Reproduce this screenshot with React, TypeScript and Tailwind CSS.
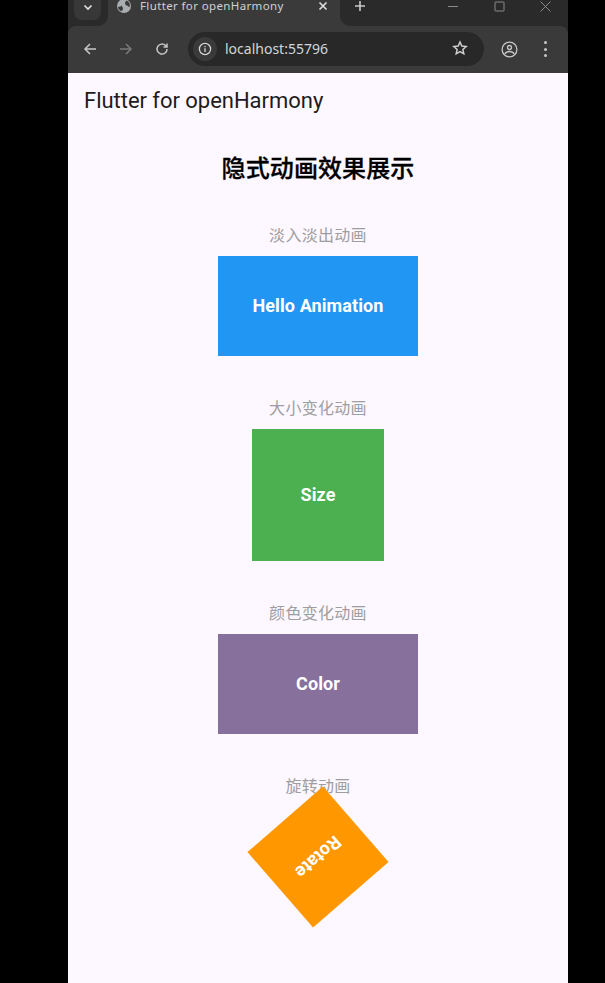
import React from "react";

const sections = [
  { label: "淡入淡出动画", text: "Hello Animation", box: "w-[200px] h-[100px] bg-[#2196f3]" },
  { label: "大小变化动画", text: "Size", box: "w-[132px] h-[132px] bg-[#4caf50]" },
  { label: "颜色变化动画", text: "Color", box: "w-[200px] h-[100px] bg-[#87709b]" },
  { label: "旋转动画", text: "Rotate", box: "w-[100px] h-[100px] bg-[#ff9800] rotate-[139deg]" },
];

function BrowserChrome() {
  return (
    <div className="bg-[#2a2a2a] text-[#c7c7c7] font-['Noto_Sans',sans-serif]">
      {/* tab strip, the dark pieces curve into the active tab */}
      <div className="h-[26px] flex bg-[#3a3a3a]">
        <div className="w-[40px] bg-[#2a2a2a] rounded-br-[10px]">
          <div className="ml-[6px] w-[27px] h-[20px] rounded-b-[8px] bg-[#383838] flex items-center justify-center pb-[6px]">
            <svg width="10" height="10" viewBox="0 0 10 10" fill="none" stroke="#e3e3e3" strokeWidth="1.6">
              <path d="M1.5 3.5 5 7l3.500-3.500" />
            </svg>
          </div>
        </div>
        <div className="w-[232px] flex items-center pl-[9px] pr-[12px] pb-[14px]">
          <svg width="14" height="14" viewBox="0 0 14 14">
            <circle cx="7" cy="7" r="7" fill="#a9adb1" />
            <path d="M4.500 1.500 7.500 1c.5 1 .2 2-.8 2.500L6 5.500 3.500 6 1.500 4.500C2 3 3.200 2 4.500 1.500ZM9 8l2.500.5L12 10.500 10 12.500 8 13l-.5-2.500L6.500 9.500 9 8Z" fill="#3a3a3a" transform="rotate(90 7 7)" />
          </svg>
          <span className="ml-[9px] text-[11.5px] leading-[12px] tracking-[0.37px] text-[#d0d0d0] whitespace-nowrap">Flutter for openHarmony</span>
          <svg className="ml-auto" width="10" height="10" viewBox="0 0 10 10" stroke="#e0e0e0" strokeWidth="1.6">
            <path d="m1.500 1.500 7 7m0-7-7 7" />
          </svg>
        </div>
        <div className="flex-1 bg-[#2a2a2a] rounded-bl-[10px] flex items-start">
          <svg className="ml-[14px]" width="12" height="12" viewBox="0 0 12 12" stroke="#c9c9c9" strokeWidth="1.6">
            <path d="M6 1v10M1 6h10" />
          </svg>
          <div className="ml-auto flex items-center mr-[17px] gap-[35px] h-[12px]">
            <svg width="11" height="11" viewBox="0 0 11 11" stroke="#8a8a8a"><path d="M0 5.500h10" /></svg>
            <svg width="11" height="11" viewBox="0 0 11 11" fill="none" stroke="#8a8a8a"><rect x="1" y="1" width="9" height="9" rx="0.5" /></svg>
            <svg width="11" height="11" viewBox="0 0 11 11" stroke="#8a8a8a"><path d="m.5.500 10 10m0-10-10 10" /></svg>
          </div>
        </div>
      </div>
      {/* toolbar */}
      <div className="h-[47px] bg-[#3a3a3a] rounded-t-[8px] flex items-center pl-[14px] pb-[1px]">
        <svg width="16" height="16" viewBox="0 0 16 16" fill="none" stroke="#c7c7c7" strokeWidth="1.500">
          <path d="M14 8H3M8 3 3 8l5 5" />
        </svg>
        <svg className="ml-[20px]" width="16" height="16" viewBox="0 0 16 16" fill="none" stroke="#7a7a7a" strokeWidth="1.500">
          <path d="M2 8h11M8 3l5 5-5 5" />
        </svg>
        <svg className="ml-[20px]" width="16" height="16" viewBox="0 0 16 16" fill="none" stroke="#c7c7c7" strokeWidth="1.500">
          <path d="M13 8a5 5 0 1 1-1.500-3.500L13 6M13 2.500V6H9.500" />
        </svg>
        <div className="ml-[18px] w-[296px] h-[34px] rounded-full bg-[#282828] flex items-center pl-[5px] relative">
          <div className="w-[24px] h-[24px] rounded-full bg-[#3a3a3a] flex items-center justify-center">
            <svg width="14" height="14" viewBox="0 0 14 14" fill="none" stroke="#d5d5d5" strokeWidth="1.300">
              <circle cx="7" cy="7" r="5.600" />
              <path d="M7 6.300v3.600M7 4v1.300" />
            </svg>
          </div>
          <span className="ml-[8px] text-[14px] text-[#d5d5d5] pb-[1px]">localhost:55796</span>
          <svg className="absolute right-[16px] top-[8px]" width="16" height="16" viewBox="0 0 24 24" fill="none" stroke="#d0d0d0" strokeWidth="2.200">
            <path d="m12 3 2.700 6.100 6.600.7-5 4.400 1.400 6.500L12 17.400l-5.700 3.300 1.400-6.500-5-4.400 6.600-.7L12 3Z" />
          </svg>
        </div>
        <svg className="ml-[17px]" width="17" height="17" viewBox="0 0 17 17" fill="none" stroke="#c7c7c7" strokeWidth="1.300">
          <circle cx="8.500" cy="8.500" r="7.400" />
          <circle cx="8.500" cy="6.500" r="2" />
          <path d="M3.800 13c1-1.700 2.800-2.500 4.700-2.500s3.700.8 4.700 2.500" />
        </svg>
        <div className="ml-[26px] flex flex-col gap-[3.500px]">
          <div className="w-[3px] h-[3px] rounded-full bg-[#c7c7c7]" />
          <div className="w-[3px] h-[3px] rounded-full bg-[#c7c7c7]" />
          <div className="w-[3px] h-[3px] rounded-full bg-[#c7c7c7]" />
        </div>
      </div>
    </div>
  );
}

export default function App() {
  return (
    <div className="w-[605px] h-[983px] bg-black overflow-hidden pl-[68px] pr-[37px]">
      <div className="h-full flex flex-col">
        <BrowserChrome />
        <div className="flex-1 bg-[#fdf7ff] font-['Roboto','Noto_Sans_CJK_SC',sans-serif]">
          <div className="h-[56px] flex items-center pl-[16px] pb-[2px] text-[22px] tracking-[-0.03px] text-[#1d1b20]">Flutter for openHarmony</div>
          <div className="flex flex-col items-center">
            <h1 className="mt-[24px] h-[32px] leading-[32px] text-[24px] font-medium tracking-[0.1px] [-webkit-text-stroke:0.3px_black] text-black">隐式动画效果展示</h1>
            <div className="mt-[38px] flex flex-col items-center gap-[40px]">
              {sections.map((s) => (
                <div key={s.label} className="flex flex-col items-center gap-[8px]">
                  <div className="h-[25px] leading-[25px] text-[16px] tracking-[0.3px] text-[#9e9e9e]">{s.label}</div>
                  <div className={`${s.box} flex items-center justify-center pb-[2px] text-[18px] tracking-[0.1px] font-bold text-white`}>{s.text}</div>
                </div>
              ))}
            </div>
          </div>
        </div>
      </div>
    </div>
  );
}
